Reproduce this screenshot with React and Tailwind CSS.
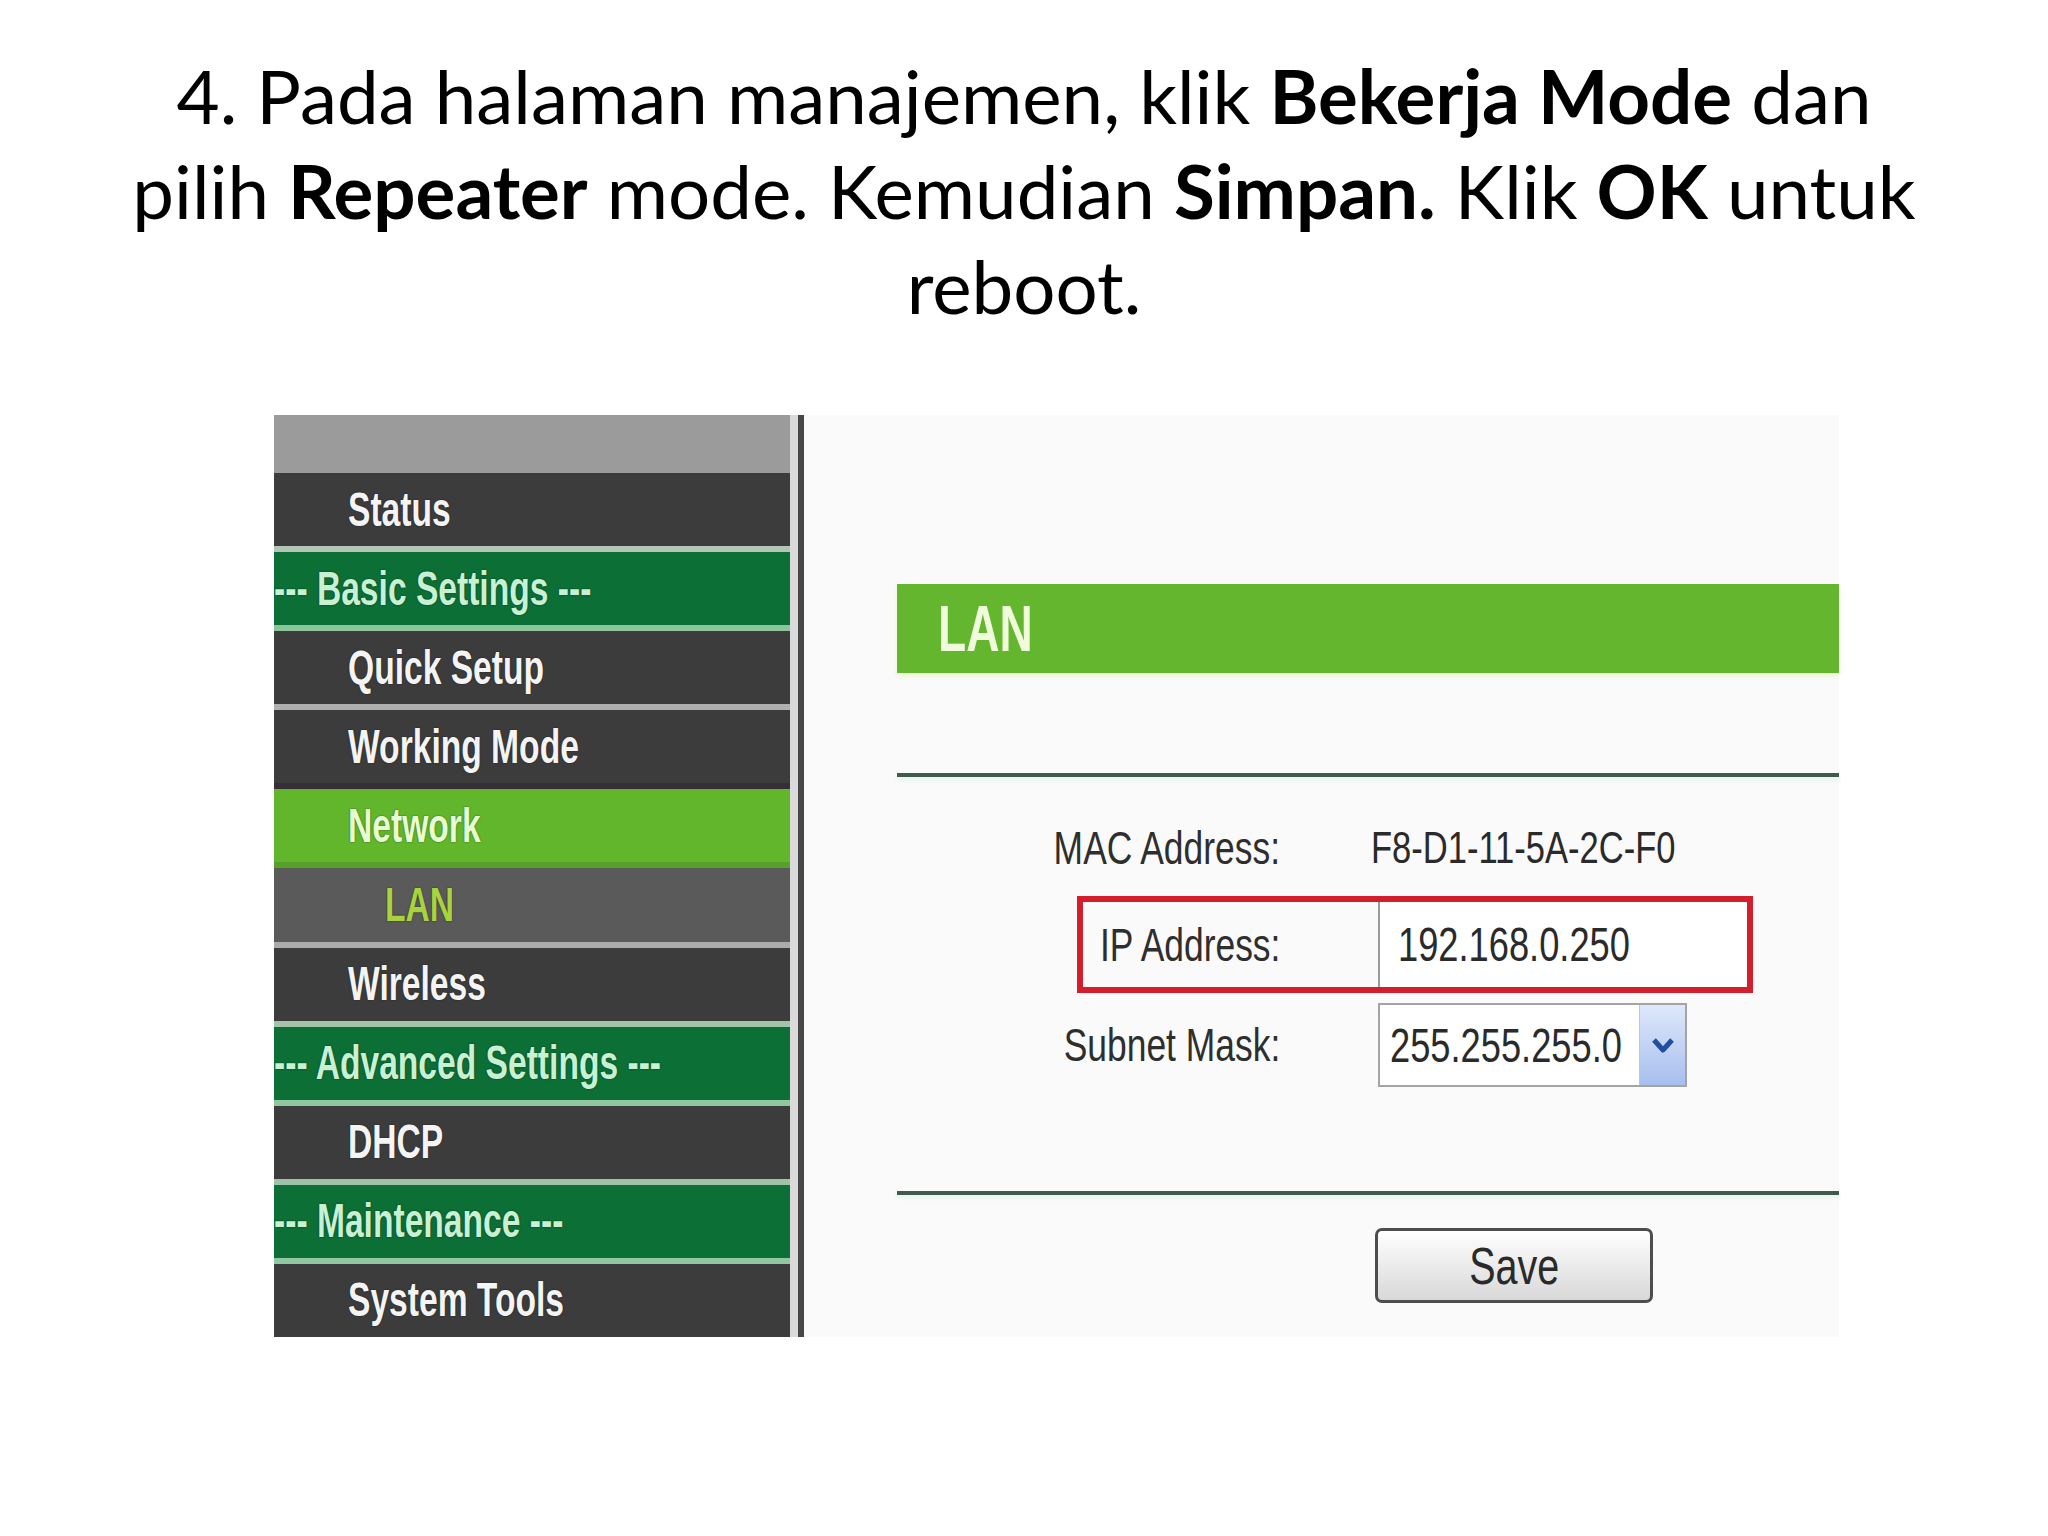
import React from "react";

const rows = [
  { t: "Status", kind: "item", border: "border-[#b4c4b6]" },
  { t: "--- Basic Settings ---", kind: "header", border: "border-[#8cc49c]" },
  { t: "Quick Setup", kind: "item", border: "border-[#aeb0ae]" },
  { t: "Working Mode", kind: "item", border: "border-[#362f3a]" },
  { t: "Network", kind: "active", border: "border-[#57a02c]" },
  { t: "LAN", kind: "sub", border: "border-[#a9aaa9]" },
  { t: "Wireless", kind: "item", border: "border-[#a3c4a8]" },
  { t: "--- Advanced Settings ---", kind: "header", border: "border-[#8fc7a0]" },
  { t: "DHCP", kind: "item", border: "border-[#9fc3a8]" },
  { t: "--- Maintenance ---", kind: "header", border: "border-[#90c8a2]" },
  { t: "System Tools", kind: "item", border: "border-transparent" },
];

function SideRow({ r, last }) {
  let bg = "bg-[#3c3c3c]";
  let color = "text-[#f4f4f4]";
  let pad = "pl-[74px]";
  if (r.kind === "header") {
    bg = "bg-[#0b6f36]";
    color = "text-[#c8f0d2]";
    pad = "pl-0";
  } else if (r.kind === "active") {
    bg = "bg-[#62b62c]";
    color = "text-[#e6ffd2]";
  } else if (r.kind === "sub") {
    bg = "bg-[#5a5a5a]";
    color = "text-[#a8d23e]";
    pad = "pl-[111px]";
  }
  return (
    <div
      className={`flex-1 flex items-center ${bg} ${pad} ${
        last ? "" : "border-b-[6px] " + r.border
      }`}
    >
      <span
        className={`inline-block whitespace-nowrap origin-left scale-x-[0.7] font-bold text-[48px] leading-none ${color} font-['Liberation_Sans',Arial,sans-serif] [text-shadow:0_0_2px_rgba(0,0,0,0.6)]`}
      >
        {r.t}
      </span>
    </div>
  );
}

function Label({ children }) {
  return (
    <span className="inline-block shrink-0 whitespace-nowrap origin-right scale-x-[0.77] text-[46px] leading-none text-[#2e2e2e] font-['Liberation_Sans',Arial,sans-serif]">
      {children}
    </span>
  );
}

function Value({ children, size = "text-[46px]", scale = "scale-x-[0.77]" }) {
  return (
    <span
      className={`inline-block shrink-0 whitespace-nowrap origin-left ${scale} ${size} leading-none text-[#2a2a2a] font-['Liberation_Sans',Arial,sans-serif]`}
    >
      {children}
    </span>
  );
}

export default function App() {
  return (
    <div className="w-[2048px] h-[1536px] bg-white overflow-hidden">
      <h1 className="pt-[48px] text-center font-['Lato','Open_Sans',sans-serif] text-[74.5px] leading-[95px] font-normal text-black">
        4. Pada halaman manajemen, klik <b className="font-bold">Bekerja Mode</b> dan
        <br />
        pilih <b className="font-bold">Repeater</b> mode. Kemudian{" "}
        <b className="font-bold">Simpan.</b> Klik <b className="font-bold">OK</b> untuk
        <br />
        reboot.
      </h1>

      <div className="mt-[82px] ml-[274px] w-[1565px] h-[922px] flex">
        {/* sidebar */}
        <div className="w-[516px] h-full flex flex-col">
          <div className="h-[58px] bg-[#9b9b9b]" />
          <div className="flex-1 flex flex-col">
            {rows.map((r, i) => (
              <SideRow key={i} r={r} last={i === rows.length - 1} />
            ))}
          </div>
        </div>
        <div className="w-[8px] h-full bg-[#dadada]" />
        <div className="w-[6px] h-full bg-[#474747]" />

        {/* content */}
        <div className="flex-1 h-full bg-[#fafafa] flex flex-col">
          <div className="mt-[169px] ml-[93px] h-[89px] bg-[#63b62e] flex items-center pl-[41px] shadow-[0_3px_5px_#eaf6cf]">
            <span className="inline-block origin-left scale-x-[0.72] font-bold text-[64px] leading-none text-[#f0fbdc] font-['Liberation_Sans',Arial,sans-serif]">
              LAN
            </span>
          </div>

          <div className="mt-[100px] ml-[93px] h-[4px] bg-[#3e5b4d] shadow-[0_3px_4px_#dff5ea]" />

          {/* form */}
          <div className="mt-[31px] ml-[273px] flex flex-col">
            <div className="h-[80px] flex items-center">
              <div className="w-[301px] shrink-0 pr-[98px] flex justify-end">
                <Label>MAC Address:</Label>
              </div>
              <div className="w-[320px] shrink-0 flex -ml-[7px]">
                <Value size="text-[44px]" scale="scale-x-[0.785]">F8-D1-11-5A-2C-F0</Value>
              </div>
            </div>

            <div className="mt-[8px] h-[97px] w-[676px] border-[6px] border-[#d21f2b] flex">
              <div className="w-[295px] shrink-0 pr-[98px] flex items-center justify-end">
                <Label>IP Address:</Label>
              </div>
              <div className="flex-1 min-w-0 border-l-2 border-[#9a9a9a] bg-white flex items-center pl-[18px]">
                <Value size="text-[49px]" scale="scale-x-[0.74]">192.168.0.250</Value>
              </div>
            </div>

            <div className="mt-[10px] h-[84px] flex items-center">
              <div className="w-[301px] shrink-0 pr-[98px] flex justify-end">
                <Label>Subnet Mask:</Label>
              </div>
              <div className="w-[309px] shrink-0 h-[84px] border-2 border-[#a4a4a4] bg-white flex items-center">
                <div className="flex-1 min-w-0 pl-[10px] flex">
                  <Value size="text-[49px]" scale="scale-x-[0.74]">255.255.255.0</Value>
                </div>
                <div className="w-[46px] shrink-0 h-full border-l border-[#b8c8e8] bg-linear-to-b from-[#dfe8fb] to-[#a7bfee] flex items-center justify-center">
                  <svg width="26" height="20" viewBox="0 0 26 20">
                    <polyline
                      points="4,5 13,15 22,5"
                      fill="none"
                      stroke="#1f4fa0"
                      strokeWidth="5"
                      strokeLinejoin="round"
                    />
                  </svg>
                </div>
              </div>
            </div>
          </div>

          <div className="mt-[104px] ml-[93px] h-[4px] bg-[#3e5b4d] shadow-[0_3px_4px_#dff5ea]" />

          <div className="mt-[33px] ml-[571px] w-[278px] h-[75px] rounded-[7px] border-[3px] border-[#4d4d4d] bg-linear-to-b from-white to-[#d8d8d8] flex items-center justify-center">
            <span className="inline-block origin-center scale-x-[0.76] text-[52px] leading-none text-[#2a2a2a] font-['Liberation_Sans',Arial,sans-serif]">
              Save
            </span>
          </div>
        </div>
      </div>
    </div>
  );
}
